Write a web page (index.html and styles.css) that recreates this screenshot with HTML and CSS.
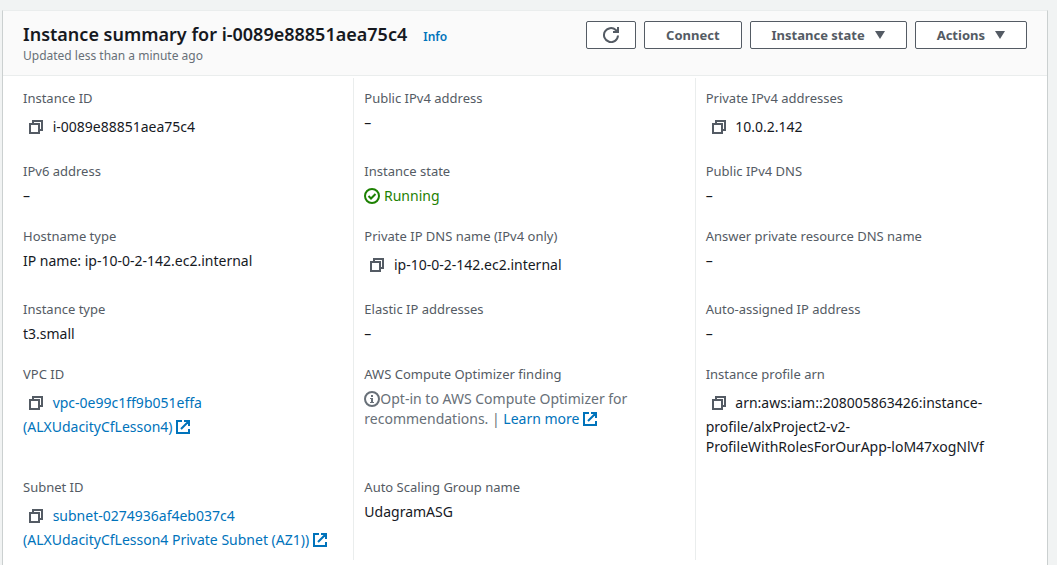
FILE: index.html
```html
<!DOCTYPE html>
<html lang="en">
<head>
<meta charset="utf-8">
<title>Instance summary</title>
<link rel="stylesheet" href="styles.css">
</head>
<body>
<svg class="sprite" aria-hidden="true">
  <symbol id="copy" viewBox="0 0 14 14"><path d="M1 4h9v9H1zM4 4V1h9v9h-3" fill="none" stroke="currentColor" stroke-width="2"/></symbol>
  <symbol id="external" viewBox="0 0 14 14"><path d="M6 1H1v12h12V9M8 1h5v5M12.5 1.5L5 9" fill="none" stroke="currentColor" stroke-width="2"/></symbol>
  <symbol id="refresh" viewBox="0 0 16 16"><path d="M15 8.5A7 7 0 1 1 12.8 3L14 4.2M15 0v5H10" fill="none" stroke="currentColor" stroke-width="2"/></symbol>
  <symbol id="check" viewBox="0 0 16 16"><path d="M8 1a7 7 0 1 1 0 14A7 7 0 0 1 8 1zM4.5 8l2.5 2.5 4.5-4.5" fill="none" stroke="currentColor" stroke-width="2"/></symbol>
  <symbol id="info" viewBox="0 0 16 16"><circle cx="8" cy="8" r="7" fill="none" stroke="currentColor" stroke-width="2"/><path d="M7 4h2v2H7zM6 7h3v4h1v1H6v-1h1V8H6z" fill="currentColor"/></symbol>
</svg>
<main class="panel">
  <header class="panel-header">
    <div class="heading">
      <div class="title-row">
        <h1 class="title">Instance summary for i-0089e88851aea75c4</h1>
        <a class="info-link" href="#info">Info</a>
      </div>
      <p class="updated">Updated less than a minute ago</p>
    </div>
    <div class="actions">
      <button class="button" type="button" aria-label="Refresh"><svg class="icon-refresh"><use href="#refresh"/></svg></button>
      <button class="button" type="button">Connect</button>
      <button class="button" type="button">Instance state <span class="caret"></span></button>
      <button class="button" type="button">Actions <span class="caret"></span></button>
    </div>
  </header>
  <div class="details">
    <dl class="column">
      <div class="field"><dt>Instance ID</dt><dd><button class="copy" type="button" aria-label="Copy instance ID"><svg class="icon"><use href="#copy"/></svg></button> i-0089e88851aea75c4</dd></div>
      <div class="field"><dt>IPv6 address</dt><dd>–</dd></div>
      <div class="field"><dt>Hostname type</dt><dd>IP name: ip-10-0-2-142.ec2.internal</dd></div>
      <div class="field"><dt>Instance type</dt><dd>t3.small</dd></div>
      <div class="field"><dt>VPC ID</dt><dd><button class="copy" type="button" aria-label="Copy VPC ID"><svg class="icon"><use href="#copy"/></svg></button> <a href="#vpc">vpc-0e99c1ff9b051effa (ALXUdacityCfLesson4)&nbsp;<svg class="icon"><use href="#external"/></svg></a></dd></div>
      <div class="field"><dt>Subnet ID</dt><dd><button class="copy" type="button" aria-label="Copy subnet ID"><svg class="icon"><use href="#copy"/></svg></button> <a href="#subnet">subnet-0274936af4eb037c4 (ALXUdacityCfLesson4 Private Subnet (AZ1))&nbsp;<svg class="icon"><use href="#external"/></svg></a></dd></div>
    </dl>
    <dl class="column">
      <div class="field"><dt>Public IPv4 address</dt><dd>–</dd></div>
      <div class="field"><dt>Instance state</dt><dd class="running"><svg class="icon-status"><use href="#check"/></svg> Running</dd></div>
      <div class="field"><dt>Private IP DNS name (IPv4 only)</dt><dd><button class="copy" type="button" aria-label="Copy private IP DNS name"><svg class="icon"><use href="#copy"/></svg></button> ip-10-0-2-142.ec2.internal</dd></div>
      <div class="field"><dt>Elastic IP addresses</dt><dd>–</dd></div>
      <div class="field"><dt>AWS Compute Optimizer finding</dt><dd class="muted"><svg class="icon-status"><use href="#info"/></svg>Opt-in to AWS Compute Optimizer for recommendations. | <a href="#learn">Learn more&nbsp;<svg class="icon"><use href="#external"/></svg></a></dd></div>
      <div class="field"><dt>Auto Scaling Group name</dt><dd>UdagramASG</dd></div>
    </dl>
    <dl class="column">
      <div class="field"><dt>Private IPv4 addresses</dt><dd><button class="copy" type="button" aria-label="Copy private IPv4 address"><svg class="icon"><use href="#copy"/></svg></button> 10.0.2.142</dd></div>
      <div class="field"><dt>Public IPv4 DNS</dt><dd>–</dd></div>
      <div class="field"><dt>Answer private resource DNS name</dt><dd>–</dd></div>
      <div class="field"><dt>Auto-assigned IP address</dt><dd>–</dd></div>
      <div class="field"><dt>Instance profile arn</dt><dd><button class="copy" type="button" aria-label="Copy instance profile arn"><svg class="icon"><use href="#copy"/></svg></button> arn:aws:iam::208005863426:instance-profile/alxProject2-v2-ProfileWithRolesForOurApp-loM47xogNlVf</dd></div>
    </dl>
  </div>
</main>
</body>
</html>
```
FILE: styles.css
```css
* { box-sizing: border-box; }
body {
  margin: 0;
  padding: 10px 9px 0 2px;
  min-height: 100vh;
  display: flex;
  background: #f1f3f3;
  color: #16191f;
  font: 14px/20px "Noto Sans", "Open Sans", sans-serif;
}
.sprite { position: absolute; width: 0; height: 0; }
a { color: #0073bb; text-decoration: none; }
.panel {
  flex: 1;
  min-width: 0;
  background: #fff;
  border: 1px solid #cbd0d0;
  border-top-color: #eaeded;
  border-bottom: 0;
}
.panel-header {
  display: flex;
  justify-content: space-between;
  gap: 20px;
  padding: 10px 20px;
  background: #fafafa;
  border-bottom: 1px solid #eaeded;
}
.title-row { display: flex; align-items: baseline; gap: 16px; }
.title { margin: 0; font-size: 18px; line-height: 26px; font-weight: 600; }
.info-link { font-size: 12px; font-weight: 600; }
.updated { margin: 0; font-size: 12px; line-height: 18px; color: #687078; }
.actions { display: flex; align-items: flex-start; gap: 8px; }
.button {
  display: flex;
  align-items: center;
  justify-content: center;
  gap: 10px;
  height: 28px;
  min-width: 50px;
  padding: 0 21px;
  background: #fff;
  border: 1px solid #545b64;
  border-radius: 2px;
  color: #545b64;
  font: 700 13px/20px "Noto Sans", "Open Sans", sans-serif;
  white-space: nowrap;
}
.button:first-child { padding: 0; }
.caret { border: 5px solid transparent; border-top: 8px solid #545b64; border-bottom: 0; }
.icon-refresh { width: 16px; height: 16px; }
.details {
  display: grid;
  grid-template-columns: repeat(3, minmax(0, 1fr));
  grid-template-rows: repeat(6, auto);
  row-gap: 20px;
  padding: 2px 11px 5px 9px;
}
.column {
  display: grid;
  grid-row: span 6;
  grid-template-rows: subgrid;
  margin: 0;
  padding: 10px;
  border-left: 1px solid #eaeded;
}
.column:first-child { border-color: transparent; }
dt { color: #545b64; font-size: 13px; margin-bottom: 5px; }
dd { margin: 0; }
.copy {
  display: inline-flex;
  align-items: center;
  justify-content: center;
  width: 26px;
  height: 28px;
  padding: 0;
  border: 0;
  background: none;
  color: #545b64;
  vertical-align: -2px;
}
.icon { width: 14px; height: 14px; vertical-align: -2px; }
.icon-status { width: 16px; height: 16px; vertical-align: -3px; }
.running { color: #1d8102; }
.muted { color: #687078; }
```
